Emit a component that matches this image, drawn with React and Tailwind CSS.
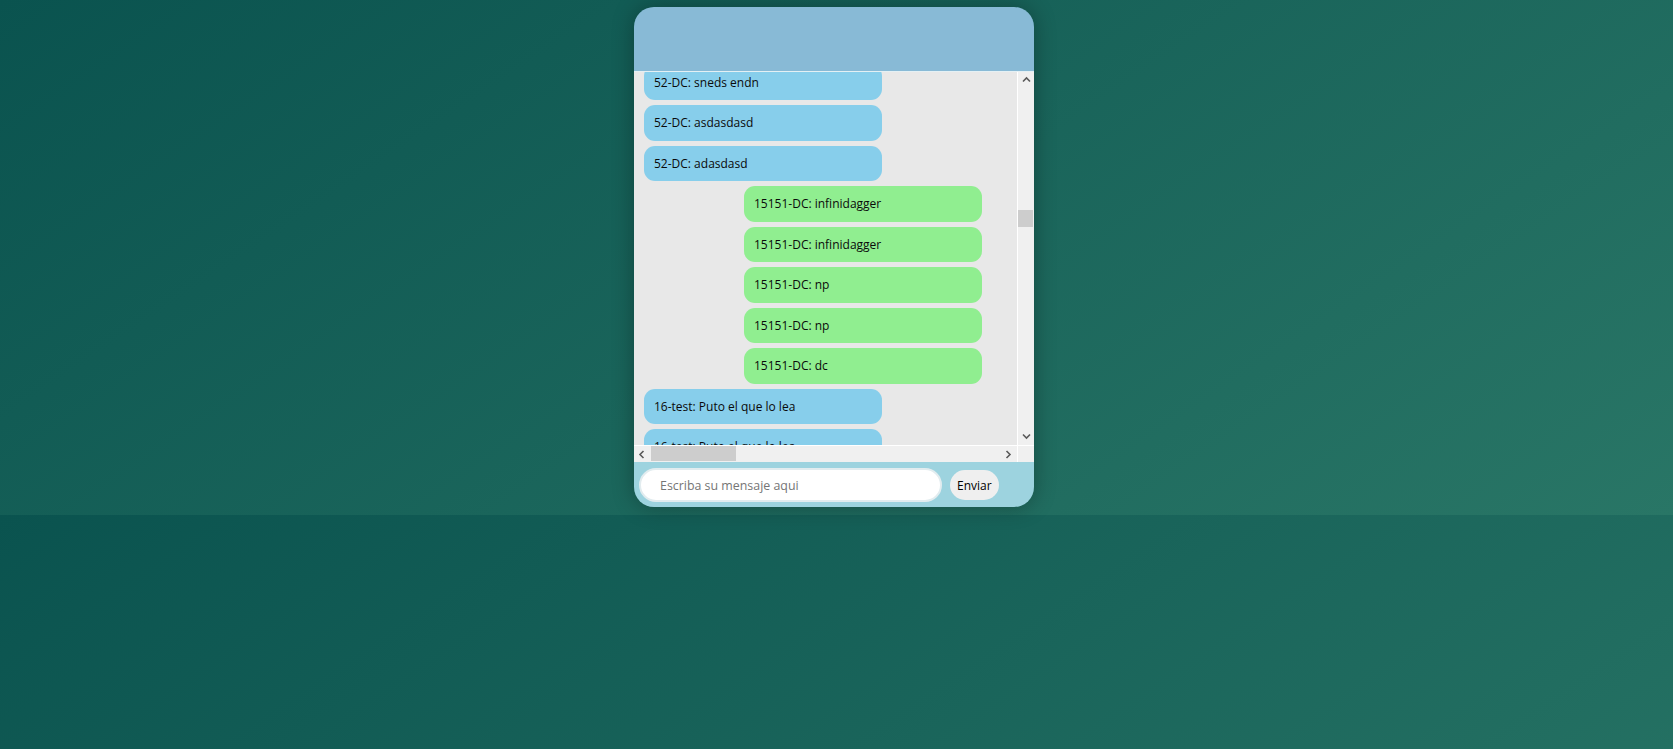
import React from 'react';

const messages = [
  { side: 'left', text: '52-DC: sneds endn' },
  { side: 'left', text: '52-DC: asdasdasd' },
  { side: 'left', text: '52-DC: adasdasd' },
  { side: 'right', text: '15151-DC: infinidagger' },
  { side: 'right', text: '15151-DC: infinidagger' },
  { side: 'right', text: '15151-DC: np' },
  { side: 'right', text: '15151-DC: np' },
  { side: 'right', text: '15151-DC: dc' },
  { side: 'left', text: '16-test: Puto el que lo lea' },
  { side: 'left', text: '16-test: Puto el que lo lea' },
];

const Chevron = ({ dir }) => {
  const pts = {
    up: '1,5.5 4.5,2 8,5.5',
    down: '1,2.5 4.5,6 8,2.5',
    left: '5.5,1 2,4.5 5.5,8',
    right: '2.5,1 6,4.5 2.5,8',
  }[dir];
  return (
    <svg width="9" height="9" viewBox="0 0 9 9">
      <polyline points={pts} fill="none" stroke="#5a5a5a" strokeWidth="1.6" />
    </svg>
  );
};

function Bubble({ side, text }) {
  const base = 'w-[238px] h-[35.5px] mb-[5px] shrink-0 rounded-[11px] px-[10px] pt-[1px] flex items-center text-[12px] text-[#0a0a0a] whitespace-nowrap';
  return side === 'left' ? (
    <div className={`${base} ml-[10px] bg-[#87ceeb]`}>{text}</div>
  ) : (
    <div className={`${base} ml-[110px] bg-[#90ee90]`}>{text}</div>
  );
}

export default function App() {
  return (
    <div
      className="w-full h-[749px] bg-[linear-gradient(146deg,#0a534f,#297666)] bg-[length:100%_515px] bg-repeat-y"
      style={{ fontFamily: '"Open Sans", "Liberation Sans", sans-serif' }}
    >
      <div className="pt-[7px] pr-[5px]">
        <div className="w-[400px] h-[500px] mx-auto rounded-[20px] overflow-hidden flex flex-col shadow-[0_0_22px_rgba(0,0,0,0.3)]">
          <div className="h-[65px] shrink-0 bg-[#88bad6] border-b border-[#e4f0f4]" />

          <div className="h-[390px] shrink-0 grid grid-cols-[383px_17px] grid-rows-[373px_17px] bg-[#e8e8e8]">
            <div className="overflow-hidden">
              <div className="flex flex-col -mt-[7.5px]">
                {messages.map((m, i) => (
                  <Bubble key={i} side={m.side} text={m.text} />
                ))}
              </div>
            </div>

            <div className="bg-[#f0f0f0] border-l border-white flex flex-col">
              <div className="h-[17px] flex items-center justify-center"><Chevron dir="up" /></div>
              <div className="flex-1 relative">
                <div className="absolute left-0 right-[1px] top-[121px] h-[17px] bg-[#cdcdcd]" />
              </div>
              <div className="h-[17px] flex items-center justify-center"><Chevron dir="down" /></div>
            </div>

            <div className="bg-[#f0f0f0] border-t border-white flex">
              <div className="w-[17px] flex items-center justify-center"><Chevron dir="left" /></div>
              <div className="flex-1 relative">
                <div className="absolute left-0 top-0 bottom-[1px] w-[85px] bg-[#cdcdcd]" />
              </div>
              <div className="w-[17px] flex items-center justify-center"><Chevron dir="right" /></div>
            </div>

            <div className="bg-[#f0f0f0] border-l border-t border-white" />
          </div>

          <div className="flex-1 bg-[#9dd3df] flex items-center pl-[5px] gap-[8px]">
            <div className="w-[303px] h-[34px] rounded-full bg-white border-2 border-[#e2ecef] flex items-center pl-[19px] pt-[3px] text-[12.4px] text-[#757575]">
              Escriba su mensaje aqui
            </div>
            <div className="h-[30px] px-[7px] pt-[2px] rounded-full bg-[#efefef] flex items-center text-[12px] text-black">
              Enviar
            </div>
          </div>
        </div>
      </div>
    </div>
  );
}
